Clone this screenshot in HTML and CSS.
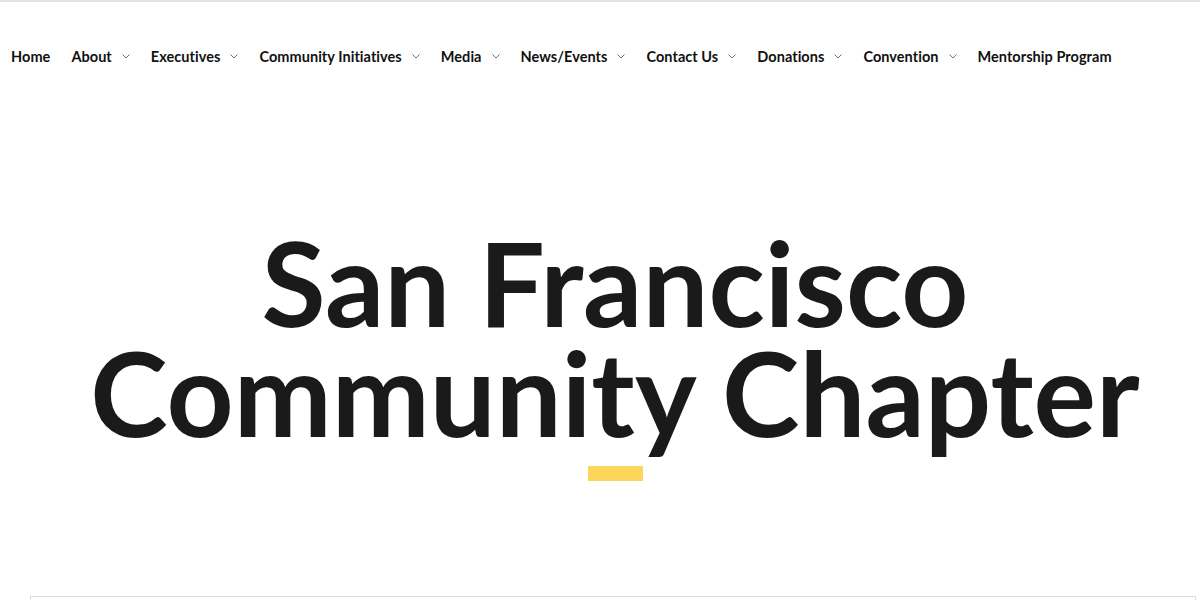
FILE: index.html
```html
<!DOCTYPE html>
<html lang="en">
<head>
<meta charset="utf-8">
<title>San Francisco Community Chapter</title>
<link rel="stylesheet" href="styles.css">
</head>
<body>
<header class="site-header">
  <nav class="main-nav">
    <a class="nav-item" href="#">Home</a>
    <a class="nav-item has-sub" href="#">About<svg class="chev" viewBox="0 0 8 5"><path d="M0.5 0.5 L4 4 L7.5 0.5"/></svg></a>
    <a class="nav-item has-sub" href="#">Executives<svg class="chev" viewBox="0 0 8 5"><path d="M0.5 0.5 L4 4 L7.5 0.5"/></svg></a>
    <a class="nav-item has-sub" href="#">Community Initiatives<svg class="chev" viewBox="0 0 8 5"><path d="M0.5 0.5 L4 4 L7.5 0.5"/></svg></a>
    <a class="nav-item has-sub" href="#">Media<svg class="chev" viewBox="0 0 8 5"><path d="M0.5 0.5 L4 4 L7.5 0.5"/></svg></a>
    <a class="nav-item has-sub" href="#">News/Events<svg class="chev" viewBox="0 0 8 5"><path d="M0.5 0.5 L4 4 L7.5 0.5"/></svg></a>
    <a class="nav-item has-sub" href="#">Contact Us<svg class="chev" viewBox="0 0 8 5"><path d="M0.5 0.5 L4 4 L7.5 0.5"/></svg></a>
    <a class="nav-item has-sub" href="#">Donations<svg class="chev" viewBox="0 0 8 5"><path d="M0.5 0.5 L4 4 L7.5 0.5"/></svg></a>
    <a class="nav-item has-sub" href="#">Convention<svg class="chev" viewBox="0 0 8 5"><path d="M0.5 0.5 L4 4 L7.5 0.5"/></svg></a>
    <a class="nav-item" href="#">Mentorship Program</a>
  </nav>
</header>
<main class="content">
  <section class="hero">
    <h1 class="hero-title">San Francisco<br>Community Chapter</h1>
    <div class="hero-bar"></div>
  </section>
  <section class="panel"></section>
</main>
</body>
</html>
```
FILE: styles.css
```css
html, body {
  margin: 0;
  padding: 0;
  background: #ffffff;
}
body {
  font-family: "Lato", "Liberation Sans", sans-serif;
  color: #1a1a1a;
  border-top: 2px solid #e4e4e4;
  overflow: hidden;
  height: 598px;
}
.site-header {
  padding: 45px 0 0 11px;
}
.main-nav {
  display: flex;
  align-items: center;
  gap: 21px;
  height: 18px;
}
.nav-item {
  display: flex;
  align-items: center;
  gap: 10px;
  font-size: 14.5px;
  font-weight: 700;
  letter-spacing: 0.05px;
  color: #111;
  text-decoration: none;
  white-space: nowrap;
}
.chev {
  width: 8px;
  height: 5px;
  fill: none;
  stroke: #6b7280;
  stroke-width: 1;
}
.content {
  margin-left: 30px;
}
.hero {
  padding-top: 162px;
  display: flex;
  flex-direction: column;
  align-items: center;
}
.hero-title {
  margin: 0;
  font-size: 117px;
  line-height: 110px;
  font-weight: 700;
  letter-spacing: 0;
  text-align: center;
  color: #1a1a1a;
}
.hero-bar {
  width: 55px;
  height: 15px;
  background: #fbd65a;
  margin-top: 19px;
}
.panel {
  margin-top: 115px;
  margin-right: 4px;
  height: 40px;
  border: 1px solid #dcdcdc;
  border-bottom: 0;
}
```
